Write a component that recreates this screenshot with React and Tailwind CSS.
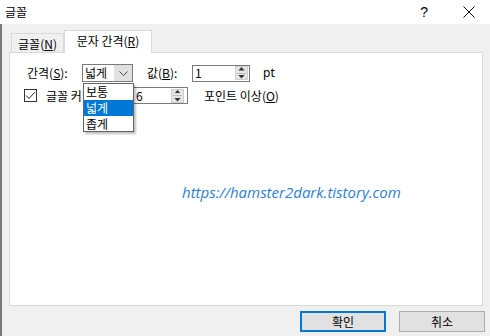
import React from "react";

const KR = { fontFamily: '"Noto Sans CJK KR", "Noto Sans", sans-serif' };

function SpinButton() {
  return (
    <div className="flex flex-col w-[13px] h-[14px] bg-[#e5e5e5] border border-[#cfcfcf] items-center justify-center gap-[2px]">
      <svg width="7" height="4" viewBox="0 0 7 4"><path d="M3.5 0 L7 4 L0 4 Z" fill="#333" /></svg>
      <div className="w-[9px] h-px bg-[#bbb]" />
      <svg width="7" height="4" viewBox="0 0 7 4"><path d="M0 0 L7 0 L3.5 4 Z" fill="#333" /></svg>
    </div>
  );
}

export default function App() {
  return (
    <div
      className="relative w-[490px] h-[336px] bg-[#f0f0f0] text-[12px] text-black leading-none overflow-hidden"
      style={KR}
    >
      {/* title bar */}
      <div className="h-[24px] bg-white flex items-center">
        <span className="pl-[5px] text-[12px]">글꼴</span>
        <div className="ml-auto flex items-center">
          <span className="text-[14px] mr-[35px]" style={{ fontFamily: '"Liberation Sans", sans-serif' }}>?</span>
          <svg width="12" height="12" viewBox="0 0 12 12" className="mr-[15px]">
            <path d="M0.5 0.5 L11.5 11.5 M11.5 0.5 L0.5 11.5" stroke="#111" strokeWidth="1" />
          </svg>
        </div>
      </div>

      {/* body */}
      <div className="h-[312px] border-l-2 border-[#7a7a7a] ml-0 flex flex-col">
        {/* tabs */}
        <div className="h-[28px] flex items-end pl-[9px] relative z-10">
          <div className="h-[19px] w-[53px] border border-b-0 border-[#d9d9d9] bg-[#f0f0f0] flex items-center justify-center pt-[1px]">
            <span>글꼴(<u>N</u>)</span>
          </div>
          <div className="h-[23px] w-[88px] -mb-px border border-b-0 border-[#d9d9d9] bg-white flex items-center justify-center pb-[2px]">
            <span>문자 간격(<u>R</u>)</span>
          </div>
        </div>

        {/* panel */}
        <div className="ml-[7px] w-[474px] h-[254px] bg-white border border-[#d9d9d9] pt-[11px] pl-[17px] relative">
          {/* row 1 */}
          <div className="flex items-center h-[18px]">
            <span className="w-[55px]">간격(<u>S</u>):</span>
            <div className="w-[51px] h-[18px] border border-[#7a7a7a] flex items-stretch bg-white">
              <span className="flex-1 flex items-center pl-[2px]">넓게</span>
              <div className="w-[18px] bg-[#e1e1e1] flex items-center justify-center">
                <svg width="9" height="5" viewBox="0 0 9 5"><path d="M0.5 0.5 L4.5 4.5 L8.5 0.5" stroke="#444" fill="none" /></svg>
              </div>
            </div>
            <span className="ml-[14px] w-[45px]">값(<u>B</u>):</span>
            <div className="w-[58px] h-[17px] border border-[#7a7a7a] flex items-center pl-[2px] pr-[1px] bg-white">
              <span className="flex-1">1</span>
              <SpinButton />
            </div>
            <span className="ml-[13px]" style={{ fontFamily: '"Noto Sans", sans-serif' }}>pt</span>
          </div>

          {/* row 2 */}
          <div className="flex items-center h-[17px] mt-[5px]">
            <div className="w-[13px] h-[13px] border border-[#333] flex items-center justify-center ml-[-3px]">
              <svg width="11" height="9" viewBox="0 0 11 9"><path d="M1 4.5 L4 7.5 L10 1" stroke="#222" strokeWidth="1" fill="none" /></svg>
            </div>
            <span className="ml-[9px] w-[87px]">글꼴 커닝(<u>K</u>):</span>
            <div className="w-[55px] h-[17px] border border-[#7a7a7a] flex items-center pl-[2px] pr-[3px] bg-white">
              <span className="flex-1">6</span>
              <SpinButton />
            </div>
            <span className="ml-[16px]">포인트 이상(<u>O</u>)</span>
          </div>

          {/* watermark */}
          <div
            className="absolute left-[172px] top-[132px] text-[15px] italic text-[#2f7fd6]"
            style={{ fontFamily: '"Open Sans", sans-serif' }}
          >
            https://hamster2dark.tistory.com
          </div>

          {/* dropdown list overlay */}
          <div className="absolute left-[73px] top-[30px] w-[51px] h-[49px] bg-white border border-[#646464] shadow-[2px_2px_2px_rgba(0,0,0,0.25)] flex flex-col">
            <div className="h-[16px] flex items-center pl-[2px]">보통</div>
            <div className="h-[16px] flex items-center pl-[2px] bg-[#0078d7] text-white">넓게</div>
            <div className="h-[15px] flex items-center pl-[2px]">좁게</div>
          </div>
        </div>

        {/* buttons */}
        <div className="flex justify-end gap-[13px] pr-[5px] mt-[5px]">
          <div className="w-[86px] h-[21px] border-2 border-[#0078d7] bg-[#e1e1e1] flex items-center justify-center">확인</div>
          <div className="w-[86px] h-[21px] border border-[#adadad] bg-[#e1e1e1] flex items-center justify-center">취소</div>
        </div>
      </div>
    </div>
  );
}
